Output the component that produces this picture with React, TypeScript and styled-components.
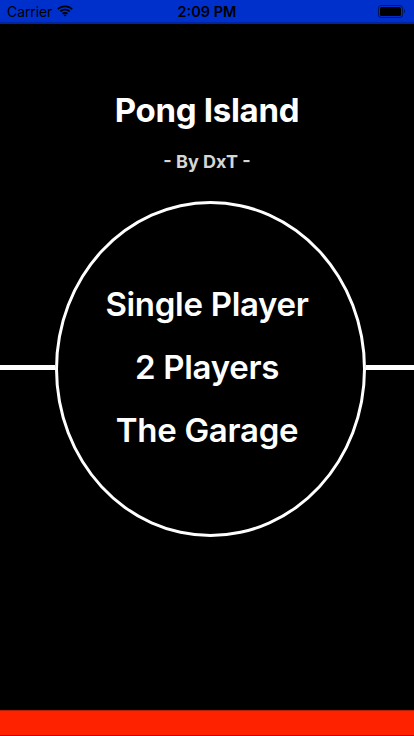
import React from 'react';
import styled, { createGlobalStyle } from 'styled-components';

const GlobalStyle = createGlobalStyle`
  html, body {
    margin: 0;
    padding: 0;
    background: #000;
  }
  body {
    font-family: Inter, "Noto Sans", "Liberation Sans", sans-serif;
  }
`;

const Screen = styled.div`
  width: 414px;
  height: 736px;
  display: flex;
  flex-direction: column;
  background: #000;
  overflow: hidden;
`;

const StatusBar = styled.div`
  height: 22px;
  border-bottom: 2px solid #0024a0;
  background: #0030cc;
  display: grid;
  grid-template-columns: 1fr auto 1fr;
  align-items: center;
  padding: 0 7px;
  color: #000;
  font-size: 14px;
`;

const Carrier = styled.div`
  display: flex;
  align-items: center;
  gap: 5px;
  letter-spacing: -0.1px;
`;

const Clock = styled.div`
  font-weight: 600;
  font-size: 14.5px;
`;

const Battery = styled.div`
  justify-self: end;
  display: flex;
  align-items: center;
  margin-right: 2px;
`;

const BatteryBody = styled.div`
  width: 21px;
  height: 9px;
  border: 1px solid rgba(0, 0, 0, 0.55);
  border-radius: 3px;
  padding: 1px;
  & > div {
    width: 100%;
    height: 100%;
    background: #000;
    border-radius: 1.5px;
  }
`;

const BatteryTip = styled.div`
  width: 1.5px;
  height: 4px;
  margin-left: 1px;
  background: rgba(0, 0, 0, 0.5);
  border-radius: 0 1px 1px 0;
`;

const Main = styled.div`
  flex: 1;
  display: flex;
  flex-direction: column;
  align-items: center;
`;

const Title = styled.h1`
  margin: 64px 0 0;
  color: #fff;
  font-size: 33px;
  font-weight: 700;
  line-height: 44px;
  letter-spacing: -0.3px;
`;

const Subtitle = styled.div`
  margin-top: 18px;
  color: #d6d6d6;
  font-size: 18px;
  font-weight: 700;
  line-height: 24px;
`;

const Field = styled.div`
  margin-top: 27px;
  width: 100%;
  display: flex;
  align-items: center;
`;

const MidLine = styled.div<{ $width?: number }>`
  flex: ${(p) => (p.$width ? `0 0 ${p.$width}px` : '1')};
  height: 5px;
  background: #fff;
  margin-top: -3px;
`;

/* the menu text is centred on the screen, the ring sits a few px right of it */
const Circle = styled.div`
  box-sizing: border-box;
  width: 311px;
  height: 336px;
  border: 3px solid #fff;
  border-radius: 50%;
  display: flex;
  flex-direction: column;
  align-items: center;
  padding: 69px 7px 0 0;
`;

const MenuItem = styled.div`
  color: #fff;
  font-size: 33px;
  font-weight: 600;
  line-height: 63px;
  letter-spacing: -0.3px;
  cursor: pointer;
`;

const BottomBar = styled.div`
  height: 24px;
  background: #ff2200;
  border-top: 1px solid #b81d00;
  border-bottom: 1px solid #5a1a8a;
`;

const Wifi = () => (
  <svg width="16" height="12" viewBox="0 0 16 12">
    <path d="M8 2.2c2.5 0 4.8 1 6.5 2.6l1.2-1.3C13.7 1.6 11 .5 8 .5S2.3 1.6.3 3.5l1.2 1.3C3.2 3.2 5.5 2.2 8 2.2z" fill="#000" />
    <path d="M8 5.5c1.6 0 3 .6 4.1 1.6l1.2-1.3C11.9 4.6 10 3.8 8 3.8S4.1 4.6 2.7 5.8l1.2 1.3C5 6.1 6.4 5.5 8 5.5z" fill="#000" />
    <path d="M8 8.7c.8 0 1.4.3 1.9.7L11.1 8.1C10.3 7.4 9.2 7 8 7s-2.3.4-3.1 1.1l1.2 1.3c.5-.4 1.1-.7 1.9-.7zM8 11.6l1.5-1.6c-.4-.3-.9-.5-1.5-.5s-1.1.2-1.5.5z" fill="#000" />
  </svg>
);

const App = () => {
  return (
    <Screen>
      <GlobalStyle />
      <StatusBar>
        <Carrier>
          Carrier
          <Wifi />
        </Carrier>
        <Clock>2:09 PM</Clock>
        <Battery>
          <BatteryBody>
            <div />
          </BatteryBody>
          <BatteryTip />
        </Battery>
      </StatusBar>
      <Main>
        <Title>Pong Island</Title>
        <Subtitle>- By DxT -</Subtitle>
        <Field>
          <MidLine $width={55} />
          <Circle>
            <MenuItem>Single Player</MenuItem>
            <MenuItem>2 Players</MenuItem>
            <MenuItem>The Garage</MenuItem>
          </Circle>
          <MidLine />
        </Field>
      </Main>
      <BottomBar />
    </Screen>
  );
};

export default App;
